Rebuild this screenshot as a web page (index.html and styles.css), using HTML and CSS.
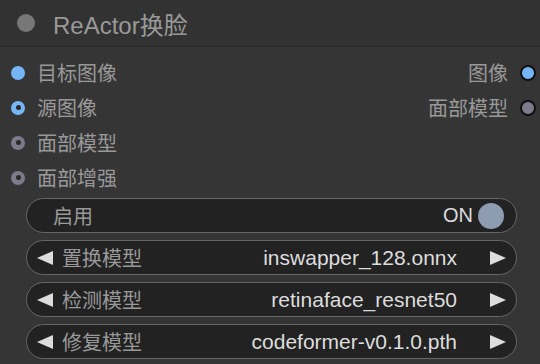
FILE: index.html
```html
<!DOCTYPE html>
<html lang="zh">
<head>
    <meta charset="UTF-8">
    <meta name="viewport" content="width=device-width, initial-scale=1.0">
    <title>ReActor换脸</title>
    <link rel="stylesheet" href="styles.css">
</head>
<body>
    <div class="node">
        <div class="node-title">
            <span class="title-dot"></span>
            <span class="title-text">ReActor换脸</span>
        </div>

        <div class="slots">
            <div class="slot-list">
                <div class="slot"><span class="dot dot-image"></span>目标图像</div>
                <div class="slot"><span class="dot dot-image hollow"></span>源图像</div>
                <div class="slot"><span class="dot dot-model hollow"></span>面部模型</div>
                <div class="slot"><span class="dot dot-model hollow"></span>面部增强</div>
            </div>
            <div class="slot-list outputs">
                <div class="slot">图像<span class="dot dot-image outlined"></span></div>
                <div class="slot">面部模型<span class="dot dot-model outlined"></span></div>
            </div>
        </div>

        <div class="widgets">
            <div class="widget toggle">
                <span class="w-label">启用</span>
                <span class="w-value">ON</span>
                <span class="knob"></span>
            </div>
            <div class="widget combo">
                <svg class="arrow" width="16" height="14" viewBox="0 0 16 14"><polygon points="0,7 16,0 16,14" /></svg>
                <span class="w-label">置换模型</span>
                <span class="w-value">inswapper_128.onnx</span>
                <svg class="arrow" width="16" height="14" viewBox="0 0 16 14"><polygon points="16,7 0,0 0,14" /></svg>
            </div>
            <div class="widget combo">
                <svg class="arrow" width="16" height="14" viewBox="0 0 16 14"><polygon points="0,7 16,0 16,14" /></svg>
                <span class="w-label">检测模型</span>
                <span class="w-value">retinaface_resnet50</span>
                <svg class="arrow" width="16" height="14" viewBox="0 0 16 14"><polygon points="16,7 0,0 0,14" /></svg>
            </div>
            <div class="widget combo">
                <svg class="arrow" width="16" height="14" viewBox="0 0 16 14"><polygon points="0,7 16,0 16,14" /></svg>
                <span class="w-label">修复模型</span>
                <span class="w-value">codeformer-v0.1.0.pth</span>
                <svg class="arrow" width="16" height="14" viewBox="0 0 16 14"><polygon points="16,7 0,0 0,14" /></svg>
            </div>
        </div>
    </div>
</body>
</html>
```

FILE: styles.css
```css
body {
    margin: 0;
    background-color: #353535;
    font-family: 'Liberation Sans', 'Noto Sans CJK SC', sans-serif;
}
.node {
    width: 540px;
    height: 364px;
    background-color: #353535;
    overflow: hidden;
}
.node-title {
    height: 47px;
    display: flex;
    align-items: center;
    padding-left: 17px;
    background-color: #323232;
    border-bottom: 1px solid #282828;
    box-sizing: border-box;
}
.title-dot {
    width: 18px;
    height: 18px;
    border-radius: 50%;
    background-color: #777;
    margin-right: 18px;
}
.title-text {
    font-size: 24px;
    color: #999;
}

.slots {
    display: flex;
    justify-content: space-between;
    padding-top: 8px;
}
.slot-list {
    display: flex;
    flex-direction: column;
}
.slot {
    height: 35px;
    display: flex;
    align-items: center;
    font-size: 20px;
    color: #999;
    padding-left: 11px;
}
.outputs .slot {
    justify-content: flex-end;
    padding-left: 0;
    padding-right: 4px;
}
.dot {
    width: 14px;
    height: 14px;
    border-radius: 50%;
    margin-right: 12px;
    box-sizing: border-box;
    position: relative;
}
.dot-image { background-color: #75b5f5; }
.dot-model { background-color: #7b7b8b; }
.dot.hollow::after {
    content: "";
    position: absolute;
    left: 4.5px;
    top: 4.5px;
    width: 5px;
    height: 5px;
    border-radius: 50%;
    background-color: #2a2a2a;
}
.dot.outlined {
    width: 16px;
    height: 16px;
    margin-right: 0;
    margin-left: 12px;
    border: 2px solid #111;
}

.widgets {
    display: flex;
    flex-direction: column;
    gap: 7px;
    margin: 3px 23px 0 26px;
}
.widget {
    height: 35px;
    display: flex;
    align-items: center;
    border: 1.5px solid #666;
    border-radius: 18px;
    background-color: #222;
    box-sizing: border-box;
    font-size: 20px;
}
.w-label {
    color: #999;
    flex: 1;
}
.w-value {
    color: #ddd;
    font-size: 21px;
}
.toggle {
    padding: 0 12px 0 26px;
}
.toggle .w-value {
    font-size: 20px;
}
.knob {
    width: 26px;
    height: 26px;
    border-radius: 50%;
    background-color: #8d9cb0;
    margin-left: 5px;
}
.combo {
    padding: 0 10px;
}
.combo .w-label {
    margin-left: 9px;
}
.combo .w-value {
    margin-right: 33px;
}
.arrow {
    fill: #ddd;
    flex-shrink: 0;
}
```
